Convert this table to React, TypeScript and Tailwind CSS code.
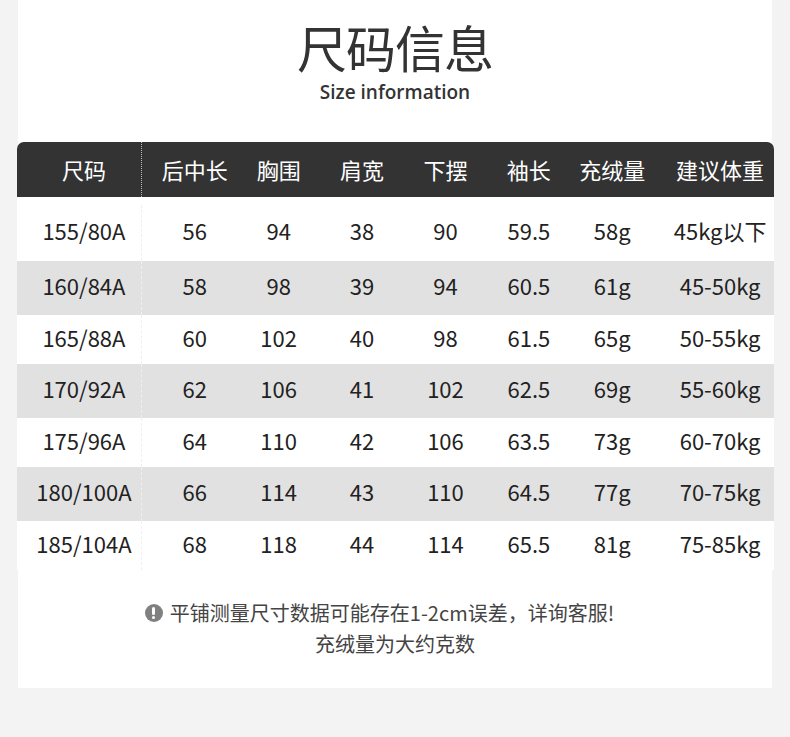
import React from 'react';

const rows = [
  ['155/80A', '56', '94', '38', '90', '59.5', '58g', '45kg以下'],
  ['160/84A', '58', '98', '39', '94', '60.5', '61g', '45-50kg'],
  ['165/88A', '60', '102', '40', '98', '61.5', '65g', '50-55kg'],
  ['170/92A', '62', '106', '41', '102', '62.5', '69g', '55-60kg'],
  ['175/96A', '64', '110', '42', '106', '63.5', '73g', '60-70kg'],
  ['180/100A', '66', '114', '43', '110', '64.5', '77g', '70-75kg'],
  ['185/104A', '68', '118', '44', '114', '65.5', '81g', '75-85kg'],
];

const headers = ['后中长', '胸围', '肩宽', '下摆', '袖长', '充绒量', '建议体重'];

// column widths tuned to the reference, first column handled separately
const colClass = [
  'w-[95px] pl-[11px]',
  'w-[84px]',
  'w-[83px]',
  'w-[84px]',
  'w-[83px]',
  'w-[96px] pr-[12px]',
  'w-[108px]',
];

const rowHeight = (i: number) => {
  if (i === 0) return 'h-[56px] bg-white';
  return i % 2 === 1 ? 'h-[54px] bg-[#e1e1e1]' : 'h-[49px] bg-white';
};

const App: React.FC = () => {
  return (
    <div className="min-h-screen bg-[#f3f3f3] font-['Noto_Sans_CJK_SC',sans-serif] text-[#333]">
      <div className="mx-[18px] h-[688px] bg-white">
        <div className="flex flex-col items-center pt-[15px]">
          <h1 className="text-[50px] leading-[62px] font-normal tracking-[-1px] text-[#333]">尺码信息</h1>
          <p className="mt-[3px] font-['Open_Sans',sans-serif] text-[19px] leading-[24px] font-semibold text-[#333]">
            Size information
          </p>
        </div>

        <div className="-ml-px mt-[38px] w-[757px]">
          <div className="flex h-[55px] items-center rounded-t-[7px] bg-[#333] text-[22px] text-white">
            <div className="flex h-full w-[124px] items-center justify-center pl-[10px]">尺码</div>
            <div className="h-full border-l border-dotted border-[#bbb]" />
            {headers.map((h, i) => (
              <div key={h} className={`${colClass[i]} text-center whitespace-nowrap`}>
                {h}
              </div>
            ))}
          </div>

          <div className="bg-white pt-[8px] text-[22px] text-[#222]">
            {rows.map((r, ri) => (
              <div key={r[0]} className={`flex items-center ${rowHeight(ri)}`}>
                <div className="flex h-full w-[124px] items-center justify-center pl-[10px] pb-[5px]">{r[0]}</div>
                <div className="h-full border-l border-dashed border-[#efefef]" />
                {r.slice(1).map((v, i) => (
                  <div key={i} className={`${colClass[i]} pb-[5px] text-center whitespace-nowrap`}>
                    {v}
                  </div>
                ))}
              </div>
            ))}
          </div>
        </div>

        <div className="mt-[27px] flex flex-col items-center text-[20px] leading-[31px] text-[#444]">
          <div className="flex items-center pr-[31px]">
            <span className="mr-[7px] flex h-[18px] w-[18px] flex-col items-center justify-center gap-[1px] rounded-full bg-[#808080]">
              <span className="h-[8px] w-[3px] rounded-full bg-white" />
              <span className="h-[3px] w-[3px] rounded-full bg-white" />
            </span>
            <span>平铺测量尺寸数据可能存在1-2cm误差，详询客服!</span>
          </div>
          <div>充绒量为大约克数</div>
        </div>
      </div>
    </div>
  );
};

export default App;
